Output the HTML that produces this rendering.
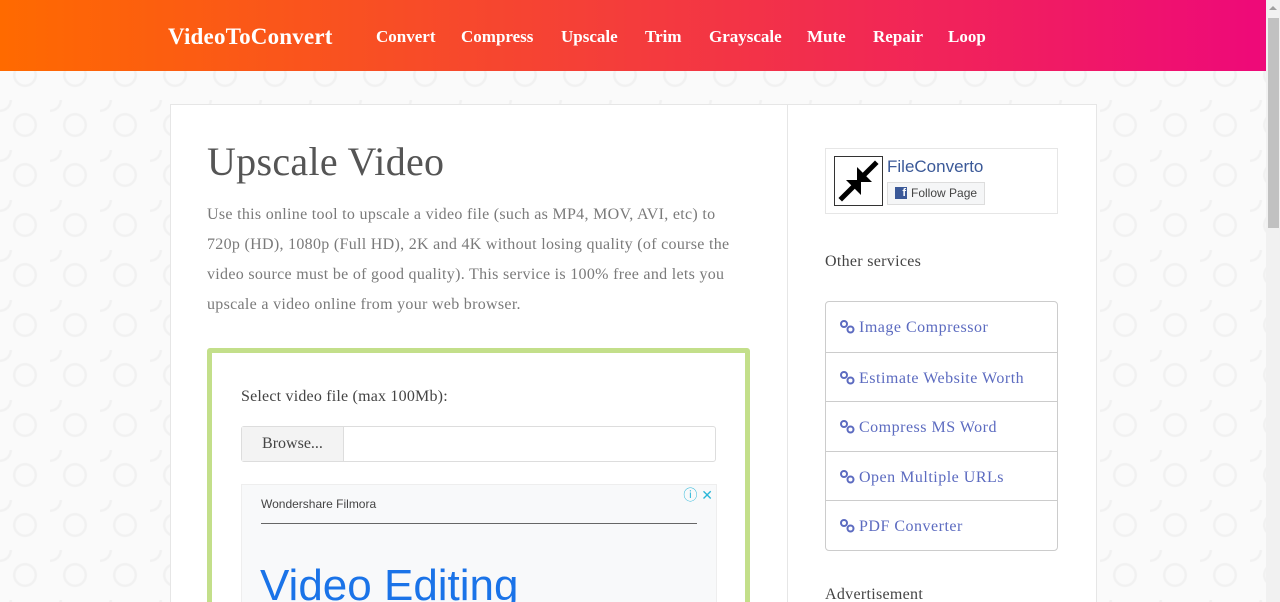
<!DOCTYPE html>
<html><head><style>
*{box-sizing:border-box;margin:0;padding:0}
html,body{width:1280px;height:602px;overflow:hidden}
body{font-family:"Liberation Serif",serif;background-color:#fafafa;
background-image:radial-gradient(circle at 25px 25px,transparent 9px,#f1f1f1 10px,#f1f1f1 11.5px,transparent 12.5px),radial-gradient(circle at 0 0,transparent 9px,#f1f1f1 10px,#f1f1f1 11.5px,transparent 12.5px);
background-size:50px 50px;position:relative}
.hdr{position:absolute;left:0;top:0;width:1266px;height:71px;background:linear-gradient(90deg,#ff6a00,#f43c3c 50%,#ee0979)}
.hdr a{position:absolute;top:27px;color:#fff;font-weight:bold;font-size:17px;text-decoration:none}
.logo{font-size:23px!important;top:24px!important;letter-spacing:0.2px}
.sb{position:absolute;right:0;top:0;width:14px;height:602px;background:#f1f1f1}
.sb div{position:absolute;left:2px;top:18px;width:11px;height:210px;background:#c1c1c1}
.sb span{position:absolute;left:3px;top:6px;border:4px solid transparent;border-bottom:4px solid #a0a0a0;border-top:0}
.card{position:absolute;left:170px;top:104px;width:927px;height:520px;background:#fff;border:1px solid #e6e6e6}
.div{position:absolute;left:787px;top:105px;width:1px;height:500px;background:#e6e6e6}
h1{position:absolute;left:207px;top:138px;font-weight:normal;font-size:40px;color:#555;letter-spacing:0.3px}
p.d{position:absolute;left:207px;top:200px;white-space:nowrap;font-size:16px;line-height:30px;color:#7a7a7a;letter-spacing:0.3px}
.gb{position:absolute;left:207px;top:348px;width:543px;height:270px;border:5px solid #c3df8a;border-radius:3px;background:#fff}
.lbl{position:absolute;left:241px;top:388px;font-size:16px;color:#444;letter-spacing:0.2px}
.inp{position:absolute;left:241px;top:426px;width:475px;height:36px;border:1px solid #ddd;border-radius:3px}
.inp span{display:block;width:102px;height:34px;background:#f3f3f3;border-right:1px solid #ddd;text-align:center;line-height:34px;font-size:16px;color:#444}
.ad{position:absolute;left:241px;top:484px;width:476px;height:130px;background:#f8f9fa;border:1px solid #eee;font-family:"Liberation Sans",sans-serif}
.ad .t{position:absolute;left:19px;top:12px;font-size:12px;color:#444}
.ad .l{position:absolute;left:19px;top:38px;width:436px;height:1px;background:#666}
.ad .b{position:absolute;left:18px;top:76px;font-size:44px;color:#1a73e8}
.ad .x{position:absolute;right:3px;top:0;font-size:14px;color:#29b6d8}
.fb{position:absolute;left:825px;top:148px;width:233px;height:66px;border:1px solid #e6e6e6}
.fb .ic{position:absolute;left:8px;top:7px;width:49px;height:50px;border:1px solid #333}
.fb .n{position:absolute;left:61px;top:8px;font-family:"Liberation Sans",sans-serif;font-size:17px;color:#3b5998}
.fb .f{position:absolute;left:61px;top:33px;width:98px;height:23px;border:1px solid #ddd;background:#f5f6f7;font-family:"Liberation Sans",sans-serif;font-size:12px;color:#444;line-height:21px;padding-left:23px}
.fb .f i{position:absolute;left:7px;top:4px;width:12px;height:12px;background:#3b5998;color:#fff;font-style:normal;font-weight:bold;font-size:11px;line-height:13px;text-align:right;padding-right:1px}
.os{position:absolute;left:825px;top:253px;font-size:16px;color:#444;letter-spacing:0.3px}
.list{position:absolute;left:825px;top:301px;width:233px;border:1px solid #ccc;border-radius:4px}
.list div{height:49.6px;border-top:1px solid #ccc;padding-left:33px;line-height:51px;font-size:16px;color:#5c6bc0;position:relative;letter-spacing:0.5px}
.list div:first-child{border-top:0}
.list svg{position:absolute;left:14px;top:18px}
.adv{position:absolute;left:825px;top:586px;font-size:16px;color:#444;letter-spacing:0.3px}
</style></head><body>
<div class="hdr">
<a class="logo" style="left:168px">VideoToConvert</a>
<a style="left:376px">Convert</a><a style="left:461px">Compress</a><a style="left:561px">Upscale</a><a style="left:645px">Trim</a><a style="left:709px">Grayscale</a><a style="left:807px">Mute</a><a style="left:873px">Repair</a><a style="left:948px">Loop</a>
</div>
<div class="sb"><span></span><div></div></div>
<div class="card"></div><div class="div"></div>
<h1>Upscale Video</h1>
<p class="d">Use this online tool to upscale a video file (such as MP4, MOV, AVI, etc) to<br>720p (HD), 1080p (Full HD), 2K and 4K without losing quality (of course the<br>video source must be of good quality). This service is 100% free and lets you<br>upscale a video online from your web browser.</p>
<div class="gb"></div>
<div class="lbl">Select video file (max 100Mb):</div>
<div class="inp"><span>Browse...</span></div>
<div class="ad"><div class="t">Wondershare Filmora</div><div class="l"></div><div class="b">Video Editing</div><div class="x">ⓘ ✕</div></div>
<div class="fb"><div class="ic"><svg width="47" height="48" viewBox="0 0 47 48"><g stroke="#000" stroke-width="5" stroke-linecap="square"><line x1="40" y1="7" x2="28" y2="19"/><line x1="7" y1="41" x2="19" y2="29"/></g><polygon points="22,10 22,25 37,25" fill="#000"/><polygon points="11,23 26,23 26,38" fill="#000"/></svg></div><div class="n">FileConverto</div><div class="f"><i>f</i>Follow Page</div></div>
<div class="os">Other services</div>
<div class="list">
<div><svg width="15" height="14" viewBox="0 0 15 14"><circle cx="4" cy="4" r="3" fill="none" stroke="#5c6bc0" stroke-width="2"/><circle cx="10.5" cy="9.5" r="3" fill="none" stroke="#5c6bc0" stroke-width="2"/></svg>Image Compressor</div>
<div><svg width="15" height="14" viewBox="0 0 15 14"><circle cx="4" cy="4" r="3" fill="none" stroke="#5c6bc0" stroke-width="2"/><circle cx="10.5" cy="9.5" r="3" fill="none" stroke="#5c6bc0" stroke-width="2"/></svg>Estimate Website Worth</div>
<div><svg width="15" height="14" viewBox="0 0 15 14"><circle cx="4" cy="4" r="3" fill="none" stroke="#5c6bc0" stroke-width="2"/><circle cx="10.5" cy="9.5" r="3" fill="none" stroke="#5c6bc0" stroke-width="2"/></svg>Compress MS Word</div>
<div><svg width="15" height="14" viewBox="0 0 15 14"><circle cx="4" cy="4" r="3" fill="none" stroke="#5c6bc0" stroke-width="2"/><circle cx="10.5" cy="9.5" r="3" fill="none" stroke="#5c6bc0" stroke-width="2"/></svg>Open Multiple URLs</div>
<div><svg width="15" height="14" viewBox="0 0 15 14"><circle cx="4" cy="4" r="3" fill="none" stroke="#5c6bc0" stroke-width="2"/><circle cx="10.5" cy="9.5" r="3" fill="none" stroke="#5c6bc0" stroke-width="2"/></svg>PDF Converter</div>
</div>
<div class="adv">Advertisement</div>
</body></html>
